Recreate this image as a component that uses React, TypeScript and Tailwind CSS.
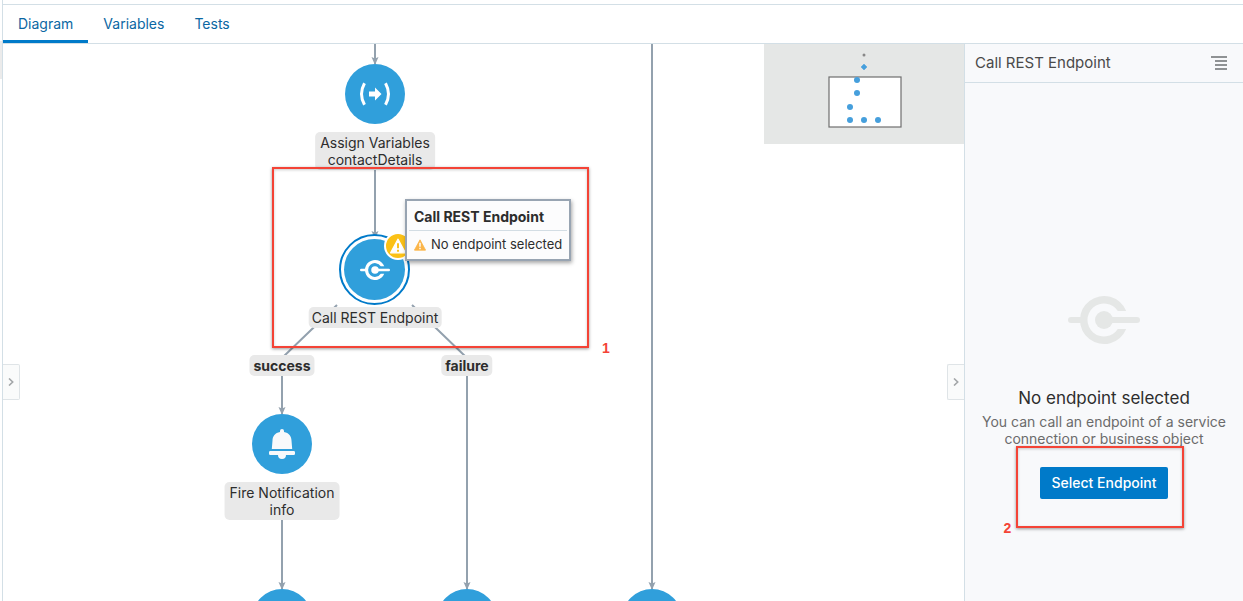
import React from "react";

function EndpointIcon({ className }: { className: string }) {
  return (
    <svg viewBox="-36 -36 72 72" className={className} fill="currentColor" aria-hidden="true">
      <path d="M22.2 -9A24 24 0 1 0 22.2 9H13.8A16.5 16.5 0 1 1 13.8 -9Z" />
      <circle r="9" />
      <path d="M0 -3H33a3 3 0 0 1 0 6H0ZM-20 -3H-33a3 3 0 0 0 0 6H-20Z" />
    </svg>
  );
}

function AssignIcon() {
  return (
    <svg viewBox="0 0 32 24" className="h-6 w-8" fill="none" aria-hidden="true">
      <path d="M5.500 1.200Q-0.500 12 5.500 22.800M26.500 1.200Q32.500 12 26.500 22.800" stroke="#fff" strokeWidth="3" />
      <path d="M10 9.500H16V5.500L22.500 12L16 18.500V14.500H10Z" fill="#fff" />
    </svg>
  );
}

function BellIcon() {
  return (
    <svg viewBox="0 0 26 30" className="h-[30px] w-[26px]" fill="#f8f9fb" aria-hidden="true">
      <path d="M13 0a2 2 0 0 1 2 2v1c5 .8 7.4 4.200 7.500 8.500L23.200 20H2.800L3.500 11.500C3.600 7.200 6 3.800 11 3V2a2 2 0 0 1 2-2Z" />
      <path d="M1.300 22H24.700a1.300 1.300 0 0 1 1.300 1.300v1.400a1.300 1.300 0 0 1-1.300 1.300H17a4 4 0 0 1-8 0H1.300A1.300 1.300 0 0 1 0 24.700v-1.400A1.300 1.300 0 0 1 1.300 22Z" />
    </svg>
  );
}

function WarningIcon({ className, mark }: { className: string; mark: string }) {
  return (
    <svg viewBox="0 0 14 14" className={className} aria-hidden="true">
      <path d="M7 1L13.500 13H0.500Z" fill="currentColor" stroke="currentColor" strokeLinejoin="round" />
      <path d="M7 4.500V9M7 10.300V12" stroke={mark} strokeWidth="1.700" />
    </svg>
  );
}

function Chevron() {
  return (
    <svg viewBox="0 0 6 8" className="h-2 w-1.5" fill="none" stroke="#a3a6a8" strokeWidth="1.6" aria-hidden="true">
      <path d="M1 0.500L4.700 4L1 7.500" />
    </svg>
  );
}

const circle = "absolute flex size-[60px] items-center justify-center rounded-full bg-[#309fdb]";
const label =
  "absolute -translate-x-1/2 rounded-[5px] bg-[#e9e9e9] text-center text-sm leading-[17px] whitespace-nowrap text-[#2d2d2d]";
const annotation =
  "pointer-events-none absolute border-2 border-[#f44336] shadow-[0_1px_3px_rgba(0,0,0,0.4),inset_0_1px_3px_rgba(0,0,0,0.2)]";
const annotationNumber =
  "absolute font-['Liberation_Sans',sans-serif] text-sm leading-4 font-bold text-[#f44336]";

function Edges() {
  return (
    <svg className="absolute inset-0 size-full" fill="none" stroke="#93a1ae" strokeWidth="2" aria-hidden="true">
      <defs>
        <marker id="arrow" markerUnits="userSpaceOnUse" markerWidth="8" markerHeight="9" refX="7" refY="4" orient="auto">
          <path d="M0 0.500L8 4L0 7.500L1.500 4Z" fill="#93a1ae" stroke="none" />
        </marker>
      </defs>
      <path d="M372 0V20" markerEnd="url(#arrow)" />
      <path d="M372 120V194" markerEnd="url(#arrow)" />
      <path d="M334 261L279 314M409 261L464 314" />
      <path d="M279 330V370" markerEnd="url(#arrow)" />
      <path d="M279 470V545" markerEnd="url(#arrow)" />
      <path d="M464 330V545" markerEnd="url(#arrow)" />
      <path d="M649 0V545" markerEnd="url(#arrow)" />
    </svg>
  );
}

function MiniMap() {
  const dots = [
    [86, 36],
    [86, 49],
    [86, 63],
    [86, 76],
    [100, 76],
    [114, 76],
  ];
  dots[0][0] = dots[1][0] = 93;
  return (
    <div className="absolute top-0 right-0 h-[100px] w-[200px] bg-[#e5e7e6]">
      <svg viewBox="0 0 200 100" className="size-full" role="img" aria-label="Diagram overview">
        <rect x="65" y="33" width="72" height="50" fill="#fff" stroke="#6e6e6e" strokeWidth="1.200" />
        <circle cx="100" cy="11" r="1.500" fill="#888" />
        <path d="M100 20L103 23L100 26L97 23Z" fill="#469fdc" stroke="#469fdc" strokeWidth="0.500" />
        {dots.map(([x, y]) => (
          <circle key={`${x}-${y}`} cx={x} cy={y} r="3" fill="#469fdc" />
        ))}
      </svg>
    </div>
  );
}

function Diagram() {
  return (
    <main className="relative min-w-0 flex-1 overflow-hidden bg-white">
      <Edges />
      <div className={`${circle} top-[20px] left-[342px]`}>
        <AssignIcon />
      </div>
      <div className={`${label} top-[88px] left-[372px] px-[5px] py-[2px]`}>
        Assign Variables
        <br />
        contactDetails
      </div>

      <div className="absolute top-[190px] left-[336px] flex size-[71px] items-center justify-center rounded-full border-2 border-[#007ac9] bg-white">
        <div className="flex size-[61px] items-center justify-center rounded-full bg-[#309fdb]">
          <EndpointIcon className="size-[30px] text-white" />
        </div>
      </div>
      <div className="absolute top-[188px] left-[381px] flex size-[28px] items-center justify-center rounded-full border-2 border-white bg-[#fbc116]">
        <WarningIcon className="size-4 text-white" mark="#fbc116" />
      </div>
      <div className={`${label} top-[263px] left-[372px] px-[3px] py-[2px]`}>Call REST Endpoint</div>

      <div className={`${label} top-[311px] left-[279px] px-1 py-[2px] font-bold`}>success</div>
      <div className={`${label} top-[311px] left-[464px] px-1 py-[2px] font-bold`}>failure</div>

      <div className={`${circle} top-[370px] left-[249px]`}>
        <BellIcon />
      </div>
      <div className={`${label} top-[438px] left-[279px] px-[5px] py-[2px]`}>
        Fire Notification
        <br />
        info
      </div>

      <div className={`${circle} top-[545px] left-[249px]`} />
      <div className={`${circle} top-[545px] left-[434px]`} />
      <div className={`${circle} top-[545px] left-[619px]`} />

      <MiniMap />

      <div className={`${annotation} top-[123px] left-[269px] h-[181px] w-[317px]`} />
      <span className={`${annotationNumber} top-[296px] left-[599px]`}>1</span>

      <div
        role="tooltip"
        className="absolute top-[155px] left-[402px] border-2 border-[#98a4b2] bg-[#fcfcfd] px-[2px] pb-[6px] whitespace-nowrap text-[#2d2d2d] shadow-[1px_2px_4px_rgba(0,0,0,0.35)]"
      >
        <div className="border-b border-[#d3dde4] px-[5px] pt-[7px] pb-[5px] text-sm leading-[17px] font-bold">
          Call REST Endpoint
        </div>
        <div className="flex items-center gap-[5px] px-[5px] pt-[5px] text-[13px] leading-[17px]">
          <WarningIcon className="size-3 text-[#fbb549]" mark="#fff" />
          No endpoint selected
        </div>
      </div>

      <button
        type="button"
        aria-label="Expand left panel"
        className="absolute top-[320px] left-0 flex h-9 w-[17px] items-center justify-center rounded-r-[2px] border border-l-0 border-[#dfe4e7] bg-[#fafbfb]"
      >
        <Chevron />
      </button>
      <button
        type="button"
        aria-label="Collapse properties"
        className="absolute top-[320px] right-0 flex h-9 w-[17px] items-center justify-center rounded-l-[2px] border border-r-0 border-[#dfe4e7] bg-[#fafbfb]"
      >
        <Chevron />
      </button>
    </main>
  );
}

function PropertiesPanel() {
  return (
    <aside className="flex w-[279px] shrink-0 flex-col border-l border-[#d3dfe6] bg-[#f8f9fb]">
      <header className="flex h-[39px] shrink-0 items-center justify-between border-b border-[#d3dfe6] pr-4 pl-[10px]">
        <h2 className="text-[15px] text-[#4a4a4a]">Call REST Endpoint</h2>
        <button type="button" aria-label="Panel menu">
          <svg viewBox="0 0 16 15" className="h-[15px] w-4" stroke="#8f9294" strokeWidth="2" aria-hidden="true">
            <path d="M0 1H16M4 5H16M4 9H16M4 13H16" />
          </svg>
        </button>
      </header>
      <div className="flex flex-1 flex-col items-center pt-[201px] text-center">
        <EndpointIcon className="size-[72px] text-[#e5e7e6]" />
        <h3 className="mt-[30px] text-[17px] leading-6 text-[#2d2d2d]">No endpoint selected</h3>
        <p className="mt-[3px] px-4 text-sm leading-[17px] text-[#6b6b6b]">
          You can call an endpoint of a service connection or business object
        </p>
        <div className="relative mt-5">
          <button type="button" className="h-8 rounded-[2px] bg-[#007ac9] px-3 text-sm font-medium text-white">
            Select Endpoint
          </button>
          <div className={`${annotation} -top-[21px] -right-4 -bottom-[29px] -left-6`} />
          <span className={`${annotationNumber} top-[53px] -left-9`}>2</span>
        </div>
      </div>
    </aside>
  );
}

export default function App() {
  return (
    <div className="flex h-screen bg-white font-[Inter,sans-serif]">
      <div className="w-[3px] shrink-0 border-r border-[#d3dfe6] pt-[41px]">
        <div className="h-[38px] bg-[#ebebeb]" />
      </div>
      <div className="flex min-w-0 flex-1 flex-col pt-1">
        <nav className="flex h-10 shrink-0 border-t border-b border-[#d3dfe6] text-sm text-[#0b67a3]">
          <a href="#diagram" aria-current="page" className="flex items-center border-b-[3px] border-[#007ac9] px-[15px] pt-[3px]">
            Diagram
          </a>
          <a href="#variables" className="flex items-center px-[15px]">
            Variables
          </a>
          <a href="#tests" className="flex items-center px-[15px]">
            Tests
          </a>
        </nav>
        <div className="flex min-h-0 flex-1">
          <Diagram />
          <PropertiesPanel />
        </div>
      </div>
    </div>
  );
}
